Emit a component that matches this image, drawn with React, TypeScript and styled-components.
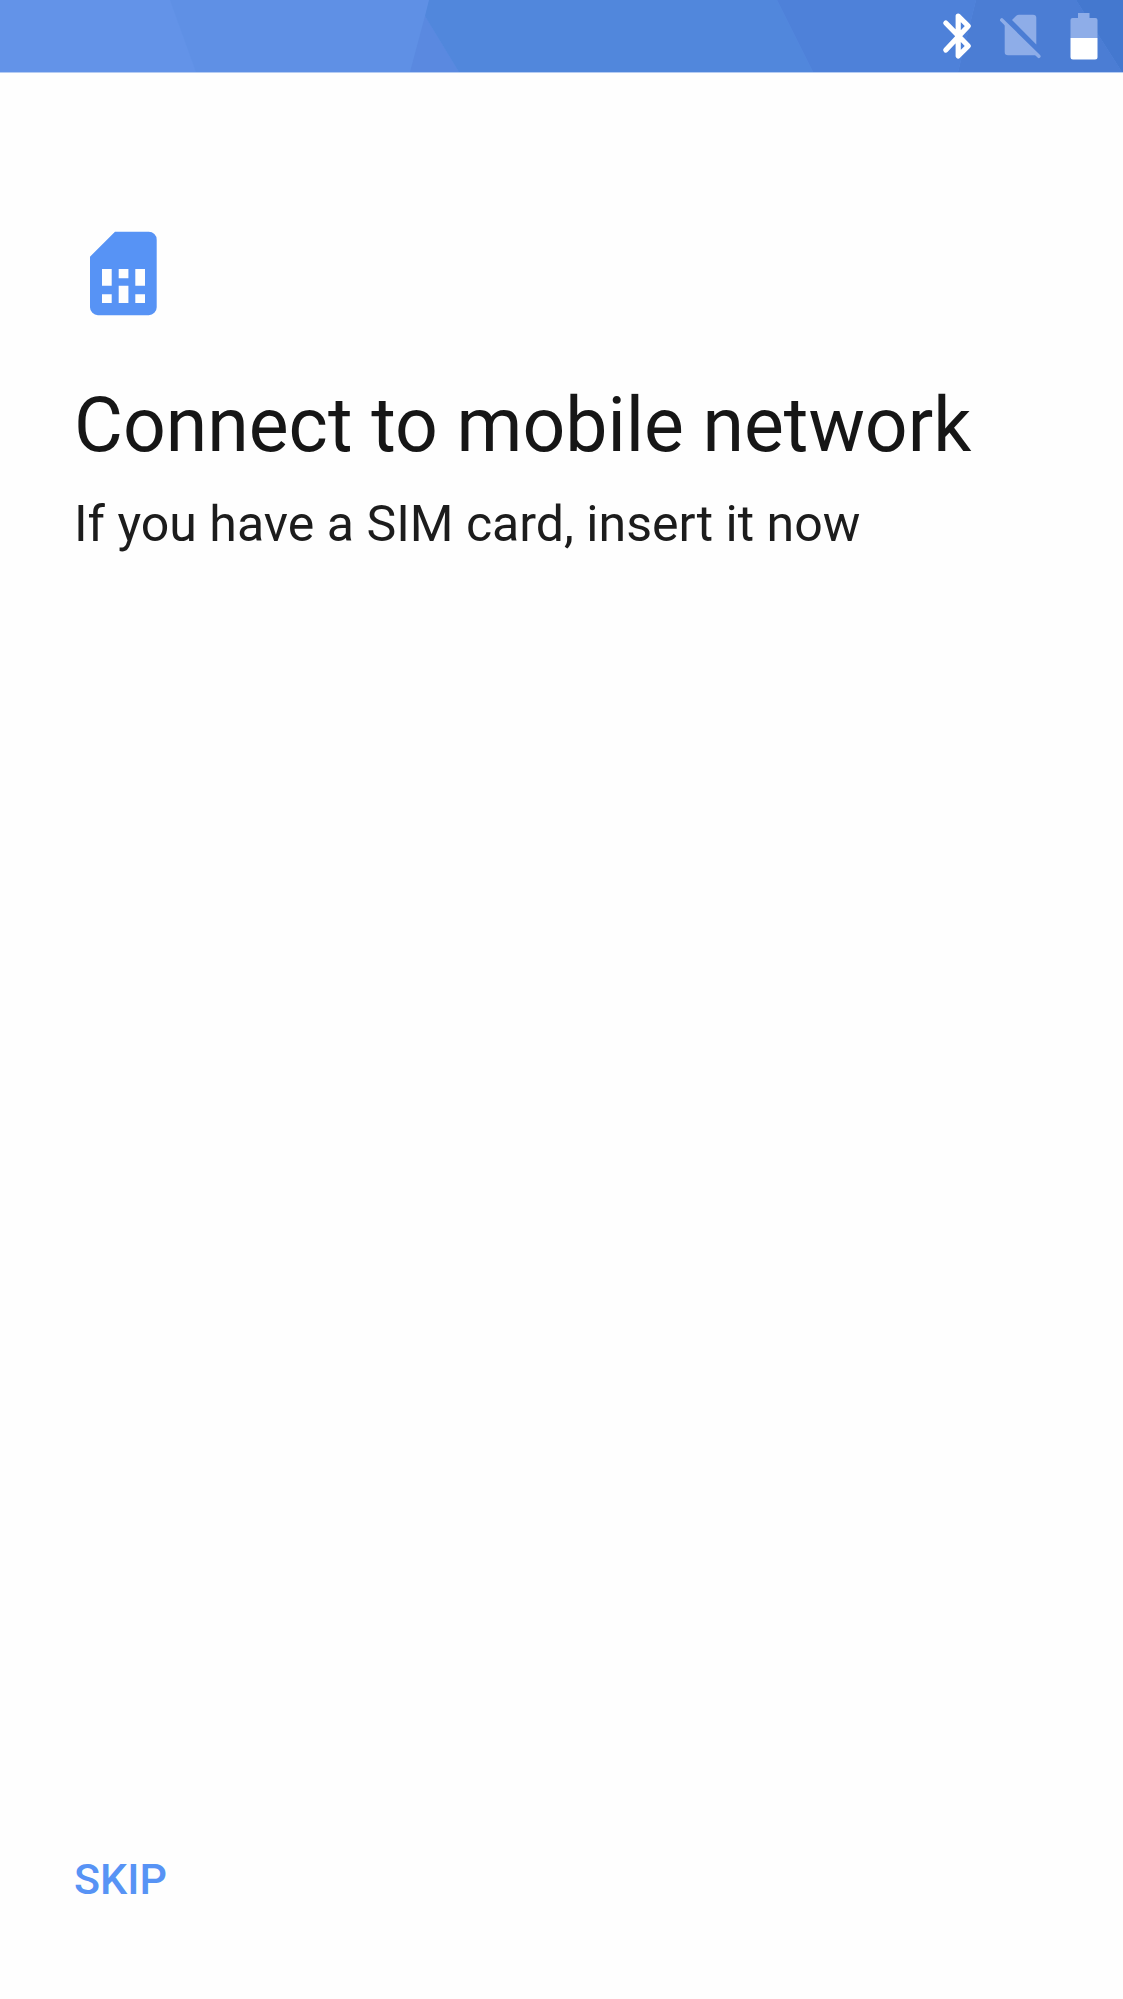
import React from "react";
import styled, { createGlobalStyle } from "styled-components";

const GlobalStyle = createGlobalStyle`
  body { margin: 0; background: #fefefe; }
`;

const Screen = styled.main`
  display: flex;
  flex-direction: column;
  min-height: 1999px;
  background: #fefefe;
  font-family: Roboto, sans-serif;
  color: #161616;
`;

const StatusBar = styled.header`
  position: relative;
  display: flex;
  justify-content: flex-end;
  height: 72px;
  border-bottom: 1px solid #b5ccf3;
  background: #5f90e5;
`;

const Facets = styled.svg`
  position: absolute;
  inset: 0;
  width: 1123px;
  height: 72px;
`;

const StatusIcons = styled.svg`
  position: relative;
  display: block;
  width: 200px;
  height: 72px;
`;

const Content = styled.section`
  display: flex;
  flex: 1;
  flex-direction: column;
  align-items: flex-start;
  padding: 150px 74px 0;
`;

const SimIcon = styled.svg`
  display: block;
  width: 100px;
  height: 100px;
`;

const Title = styled.h1`
  margin: 58px 0 0;
  font-size: 75.15px;
  font-weight: 400;
  line-height: 88px;
  white-space: nowrap;
`;

const Description = styled.p`
  margin: 25px 0 0;
  font-size: 50.08px;
  line-height: 60px;
  color: #1c1c1c;
  white-space: nowrap;
`;

const Footer = styled.footer`
  display: flex;
  padding: 0 74px 90px;
`;

const SkipButton = styled.button`
  padding: 0;
  border: 0;
  background: none;
  color: #5793f5;
  font: 500 43px/60px Roboto, sans-serif;
  cursor: pointer;
`;

export default function App() {
  return (
    <Screen>
      <GlobalStyle />
      <StatusBar>
        <Facets viewBox="0 0 1123 72" aria-hidden="true">
          <path fill="#6393e8" d="M0 0H170L196 72H0z" />
          <path fill="#5a89e0" d="M425 16L459 72H410z" />
          <path fill="#5187dc" d="M429 0H777L813 72H459L425 16z" />
          <path fill="#4e81d9" d="M777 0H976L958 72H813z" />
          <path fill="#4b7dd4" d="M976 0H1076L1122 72H958z" />
          <path fill="#4478cf" d="M1076 0H1123V72H1122z" />
        </Facets>
        <StatusIcons viewBox="923 0 200 72" aria-hidden="true">
          <path
            fill="none"
            stroke="#fff"
            strokeWidth="5.2"
            strokeLinecap="round"
            strokeLinejoin="round"
            d="M945.8 23L968.3 46L958.2 56V16L968.3 26L945.8 50"
          />
          <g fill="#8eade8">
            <path d="M1012 20L1016 16Q1017.500 14.700 1019 14.700H1033Q1036.300 14.700 1036.300 18V44.500z" />
            <path d="M1004.700 23V52Q1004.700 55.200 1008 55.200H1036z" />
            <path d="M1001.800 20L1038.800 56.300" stroke="#8eade8" strokeWidth="3.6" strokeLinecap="round" />
            <path d="M1070.500 38V20Q1070.500 18 1072.500 18H1078V13H1089.500V18H1095.500Q1097.500 18 1097.500 20V38z" />
          </g>
          <path fill="#fff" d="M1070.500 38H1097.500V57Q1097.500 59.500 1095 59.500H1073Q1070.500 59.500 1070.500 57z" />
        </StatusIcons>
      </StatusBar>
      <Content>
        <SimIcon viewBox="0 0 100 100" aria-hidden="true">
          <path
            fill="#5793f5"
            d="M41 8.700H74.500A8 8 0 0 1 82.700 16.900V84A8 8 0 0 1 74.500 92.200H24.200A8 8 0 0 1 16 84V33.700z"
          />
          <path
            fill="#fefefe"
            d="M28 46h9.700v16.700H28zM44.700 46h9.700v9.300h-9.700zM61.300 46H71v16.700h-9.700zM28 71.300h9.700v8.700H28zM44.700 62.700h9.700v17.300h-9.700zM61.300 71.300H71v8.700h-9.700z"
          />
        </SimIcon>
        <Title>Connect to mobile network</Title>
        <Description>If you have a SIM card, insert it now</Description>
      </Content>
      <Footer>
        <SkipButton type="button">SKIP</SkipButton>
      </Footer>
    </Screen>
  );
}
